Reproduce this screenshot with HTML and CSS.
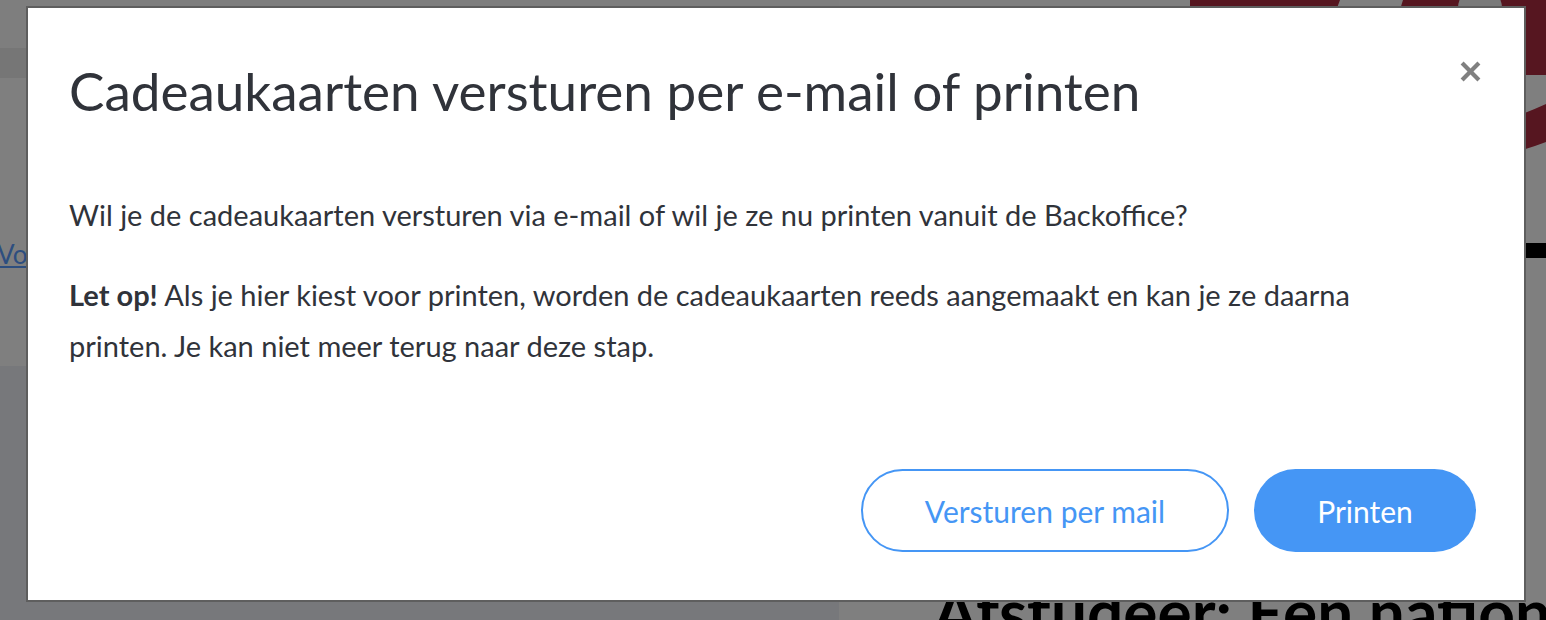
FILE: index.html
```html
<!DOCTYPE html>
<html lang="nl">
<head>
<meta charset="utf-8">
<title>Cadeaukaarten versturen</title>
<link rel="stylesheet" href="styles.css">
</head>
<body>
<div class="page">
  <div class="left">
    <div class="l-top"></div>
    <div class="l-band"></div>
    <div class="l-panel"><a class="l-link" href="#">Voeg toe</a></div>
    <div class="l-rest"></div>
  </div>
  <div class="right">
    <div class="brand">
      <svg class="brand-logo" width="356" height="160" viewBox="0 0 356 160">
        <polygon points="0,0 150,0 120,80 0,80" fill="#ac2c40"/>
        <polygon points="213,0 356,0 356,75 190,75" fill="#ac2c40"/>
        <circle cx="290" cy="8" r="22" fill="#f4f4f4"/>
        <path d="M300 124 Q330 116 356 104 L356 142 Q330 152 300 158 Z" fill="#ac2c40"/>
      </svg>
    </div>
    <div class="rule"></div>
    <h2 class="promo">Afstudeer: Een nationaal feest</h2>
  </div>
</div>
<div class="backdrop"></div>
<div class="modal" role="dialog">
  <div class="modal-head">
    <h1 class="modal-title">Cadeaukaarten versturen per e-mail of printen</h1>
    <button class="close" aria-label="Sluiten">
      <svg width="20" height="20" viewBox="0 0 20 20"><path d="M2 2 L18 18 M18 2 L2 18" stroke="#808080" stroke-width="4" stroke-linecap="butt"/></svg>
    </button>
  </div>
  <div class="modal-body">
    <p class="p1">Wil je de cadeaukaarten versturen via e-mail of wil je ze nu printen vanuit de Backoffice?</p>
    <p class="p2"><strong>Let op!</strong> Als je hier kiest voor printen, worden de cadeaukaarten reeds aangemaakt en kan je ze daarna<br>printen. Je kan niet meer terug naar deze stap.</p>
  </div>
  <div class="modal-foot">
    <button class="btn btn-outline">Versturen per mail</button>
    <button class="btn btn-fill">Printen</button>
  </div>
</div>
</body>
</html>
```
FILE: styles.css
```css
html, body {
  margin: 0;
  padding: 0;
  width: 1546px;
  height: 620px;
  overflow: hidden;
  font-family: "Lato", "Liberation Sans", sans-serif;
}

.page {
  display: flex;
  width: 1546px;
  height: 620px;
}

.left {
  width: 839px;
  flex: 0 0 839px;
  display: flex;
  flex-direction: column;
}

.l-top { height: 48px; background: #fcfcfc; }
.l-band { height: 30px; background: #ececec; }
.l-panel {
  height: 288px;
  background: #ffffff;
  padding-top: 160px;
  box-sizing: border-box;
}
.l-link {
  display: inline-block;
  margin-left: -3px;
  font-size: 26px;
  color: #5a9cff;
  text-decoration: underline;
}
.l-rest { flex: 1; background: #eef0f6; }

.right {
  flex: 1 1 auto;
  min-width: 0;
  overflow: hidden;
  background: #ffffff;
  display: flex;
  flex-direction: column;
}

.brand {
  height: 160px;
  flex: 0 0 160px;
  display: flex;
  justify-content: flex-end;
}
.brand-logo { display: block; }

.rule {
  margin-top: 83px;
  margin-left: 420px;
  height: 15px;
  flex: 0 0 15px;
  background: #000;
}

.promo {
  margin: 322px 0 0 94px;
  font-size: 64px;
  line-height: 1;
  font-weight: 700;
  color: #000;
  white-space: nowrap;
}

.backdrop {
  position: fixed;
  inset: 0;
  background: rgba(0, 0, 0, 0.5);
}

.modal {
  position: fixed;
  left: 26px;
  top: 6px;
  width: 1500px;
  height: 596px;
  box-sizing: border-box;
  border: 2px solid #5e5e5e;
  background: #fff;
  display: flex;
  flex-direction: column;
  color: #30333a;
}

.modal-head {
  display: flex;
  justify-content: space-between;
  align-items: flex-start;
  padding: 0 43px 0 41px;
}

.modal-title {
  margin: 52px 0 0 0;
  font-size: 53px;
  line-height: 62px;
  font-weight: 400;
  color: #30333a;
}

.close {
  margin-top: 53px;
  width: 21px;
  height: 21px;
  padding: 0;
  border: 0;
  background: transparent;
  display: flex;
}
.close svg { width: 21px; height: 21px; }

.modal-body {
  padding: 0 40px 0 41px;
  font-size: 29px;
  line-height: 51px;
}

.p1 { margin: 67px 0 0 0; }
.p2 { margin: 29px 0 0 0; }
.p2 strong { font-weight: 700; }

.modal-foot {
  display: flex;
  justify-content: flex-end;
  gap: 25px;
  padding: 0 48px 0 0;
  margin-top: 98px;
}

.btn {
  height: 83px;
  border-radius: 42px;
  font-family: inherit;
  font-size: 30px;
  box-sizing: border-box;
  padding: 0;
}

.btn-outline {
  width: 368px;
  background: #fff;
  border: 2px solid #4596f5;
  color: #4596f5;
}

.btn-fill {
  width: 222px;
  background: #4596f5;
  border: 0;
  color: #fff;
}
```
